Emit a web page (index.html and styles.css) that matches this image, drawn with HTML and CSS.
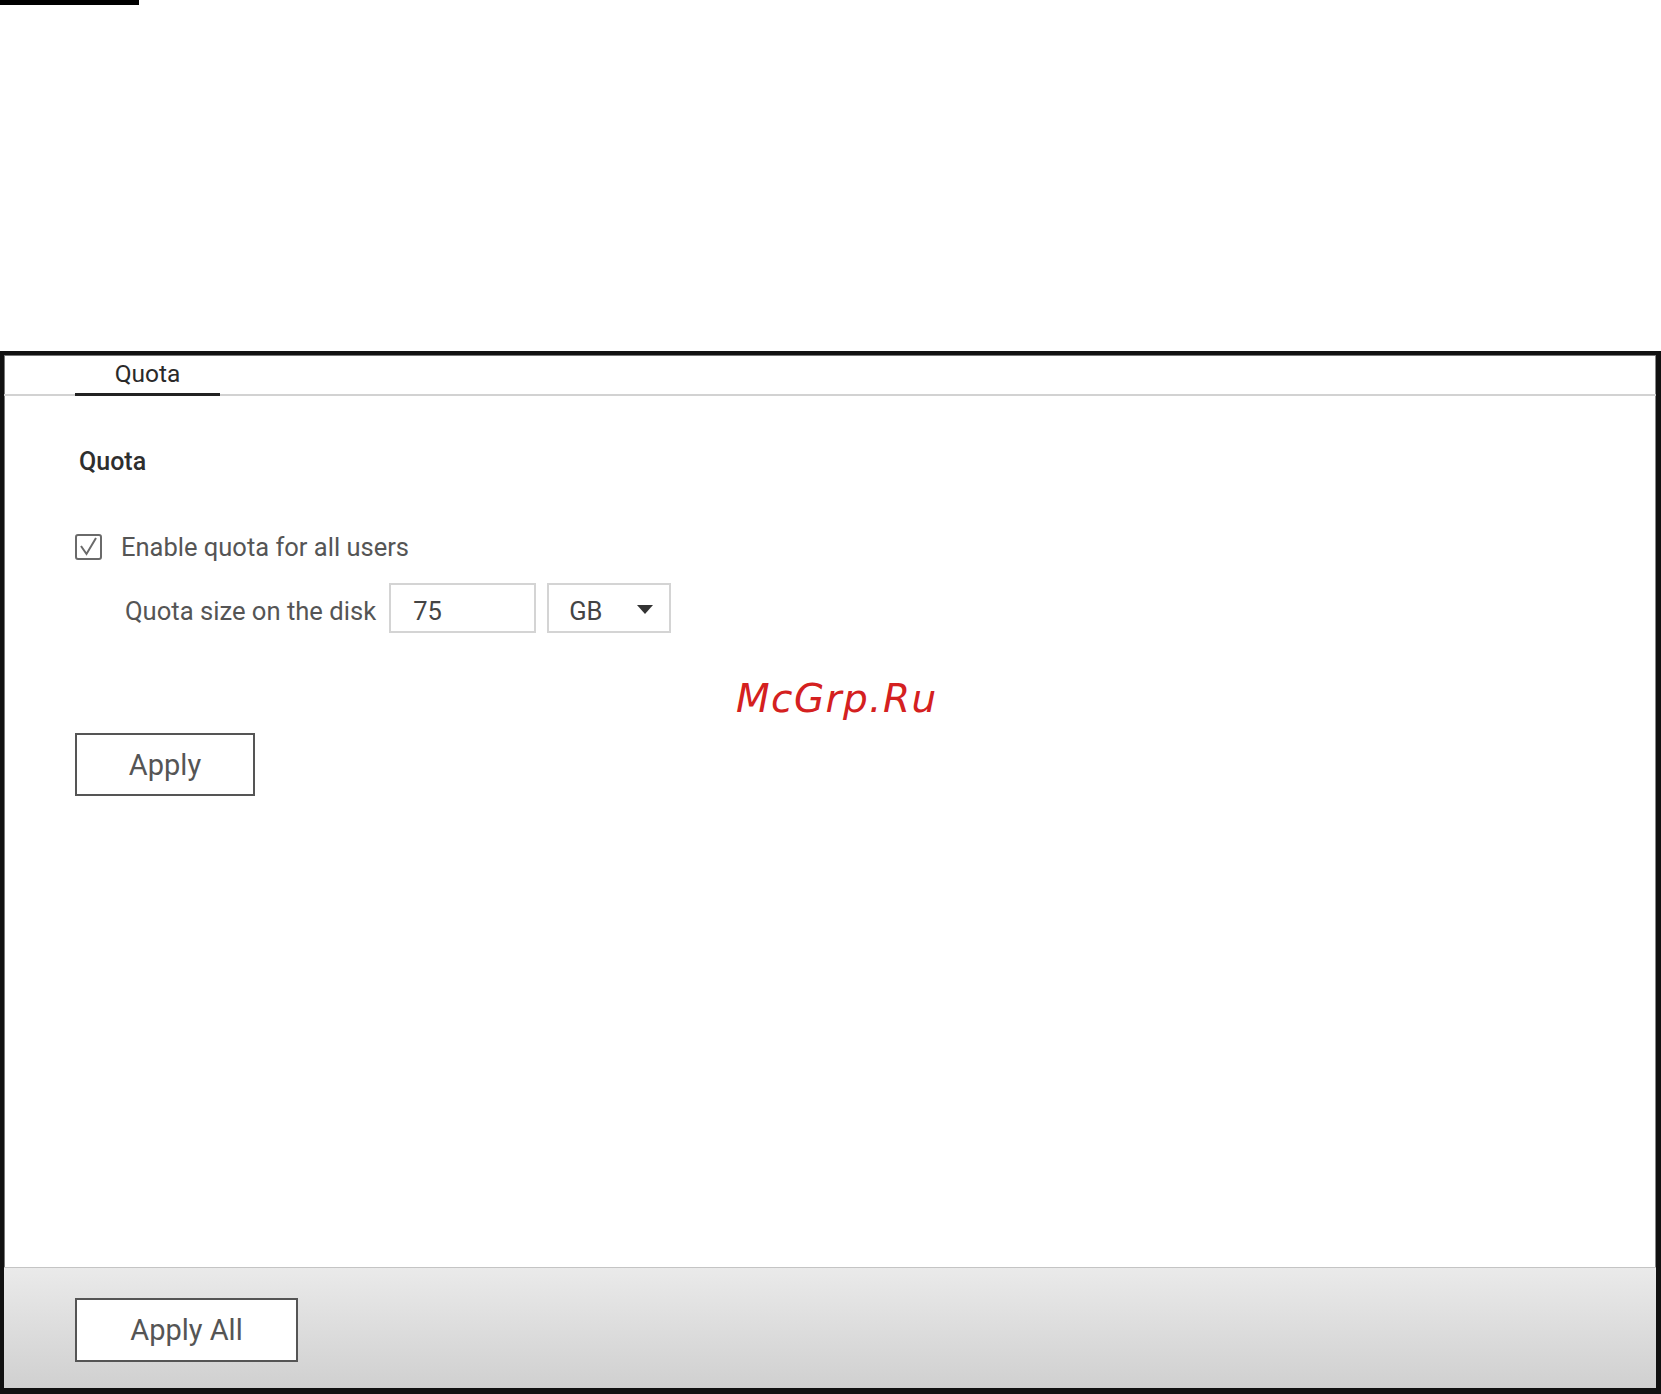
FILE: index.html
```html
<!DOCTYPE html>
<html lang="en">
<head>
<meta charset="utf-8">
<title>Quota</title>
<link rel="stylesheet" href="styles.css">
</head>
<body>
<div class="topbar"></div>
<div class="frame">
  <div class="main">
    <div class="tabbar">
      <div class="tab">Quota</div>
    </div>
    <div class="content">
      <div class="heading">Quota</div>
      <label class="check-row">
        <svg class="checkbox" width="27" height="26" viewBox="0 0 27 26">
          <rect x="1" y="1" width="25" height="24" rx="2" fill="#fff" stroke="#6a6a6a" stroke-width="2"/>
          <path d="M6 12 L11.5 20 L21 4" fill="none" stroke="#6a6a6a" stroke-width="2"/>
        </svg>
        <span class="check-label">Enable quota for all users</span>
      </label>
      <div class="size-row">
        <span class="size-label">Quota size on the disk</span>
        <div class="field">75</div>
        <div class="select">
          <span>GB</span>
          <span class="arrow"></span>
        </div>
      </div>
      <button class="btn btn-apply">Apply</button>
    </div>
  </div>
  <div class="footer">
    <button class="btn btn-apply-all">Apply All</button>
  </div>
</div>
<div class="watermark">McGrp.Ru</div>
</body>
</html>
```

FILE: styles.css
```css
html, body {
  margin: 0;
  padding: 0;
  background: #fff;
}
body {
  width: 1661px;
  height: 1394px;
  font-family: Roboto, "Liberation Sans", sans-serif;
  overflow: hidden;
}
.topbar {
  width: 139px;
  height: 5px;
  background: #000;
}
.frame {
  margin-top: 346px;
  height: 1043px;
  box-sizing: border-box;
  border-style: solid;
  border-color: #111;
  border-width: 4px 5px 6px 4px;
  display: flex;
  flex-direction: column;
  box-shadow: inset 1px 1px 0 #777, inset -1px -1px 0 #888;
}
.main {
  flex: 1;
  display: flex;
  flex-direction: column;
}
.tabbar {
  height: 39px;
  border-bottom: 2px solid #d2d2d2;
  display: flex;
  align-items: flex-end;
  padding-left: 71px;
}
.tab {
  width: 145px;
  text-align: center;
  font-size: 24.5px;
  line-height: 30px;
  color: #2a2a2a;
  border-bottom: 3px solid #222;
  margin-bottom: -2px;
  padding-bottom: 4px;
}
.content {
  padding-left: 71px;
  display: flex;
  flex-direction: column;
  align-items: flex-start;
}
.heading {
  margin-top: 51px;
  margin-left: 4px;
  font-size: 25px;
  line-height: 30px;
  color: #2e2e2e;
  font-weight: 500;
}
.check-row {
  margin-top: 55px;
  display: flex;
  align-items: center;
  gap: 19px;
  height: 30px;
}
.checkbox {
  display: block;
}
.check-label {
  font-size: 25.5px;
  line-height: 30px;
  color: #555;
}
.size-row {
  margin-top: 21px;
  padding-left: 50px;
  display: flex;
  align-items: center;
  height: 50px;
}
.size-label {
  font-size: 25.6px;
  line-height: 30px;
  color: #555;
  margin-right: 13px;
  padding-top: 5px;
}
.field, .select {
  box-sizing: border-box;
  height: 50px;
  border: 2px solid #d4d4d4;
  font-size: 25.5px;
  line-height: 30px;
  color: #444;
  display: flex;
  align-items: center;
}
.field {
  width: 147px;
  padding-left: 22px;
  padding-top: 5px;
}
.select {
  width: 124px;
  margin-left: 11px;
  padding-left: 20px;
  padding-right: 16px;
  justify-content: space-between;
}
.select span:first-child {
  padding-top: 5px;
}
.arrow {
  width: 0;
  height: 0;
  border-left: 8px solid transparent;
  border-right: 8px solid transparent;
  border-top: 9px solid #333;
  margin-top: 3px;
}
.btn {
  box-sizing: border-box;
  background: #fff;
  border: 2px solid #555;
  font-family: Roboto, "Liberation Sans", sans-serif;
  font-size: 29px;
  color: #555;
  padding: 0;
  margin: 0;
}
.btn-apply {
  margin-top: 100px;
  width: 180px;
  height: 63px;
}
.footer {
  height: 121px;
  box-sizing: border-box;
  border-top: 1px solid #c4c4c4;
  background: linear-gradient(#eaeaea, #d0d0d0);
  padding-top: 30px;
  padding-left: 71px;
}
.btn-apply-all {
  width: 223px;
  height: 64px;
}
.watermark {
  position: absolute;
  left: 736px;
  top: 679px;
  font-family: "DejaVu Sans", sans-serif;
  font-style: italic;
  font-size: 39px;
  line-height: 39px;
  letter-spacing: 1.4px;
  color: #d42020;
}
```
